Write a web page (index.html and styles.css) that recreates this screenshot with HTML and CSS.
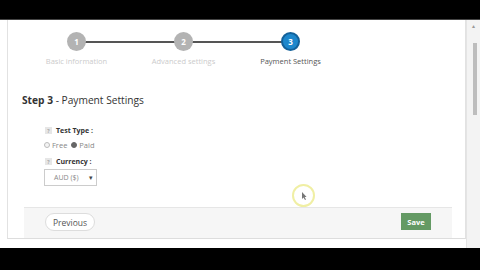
FILE: index.html
```html
<!DOCTYPE html>
<html lang="en">
<head>
    <meta charset="UTF-8">
    <title>Create Test - Payment Settings</title>
    <link rel="stylesheet" href="styles.css">
</head>
<body>
    <div class="screen">
        <div class="topbar"></div>

        <div class="window">
            <div class="page">
                <div class="card">
                    <div class="wizard">
                        <div class="step done">
                            <span class="step-num">1</span>
                            <span class="step-label">Basic information</span>
                        </div>
                        <div class="step done">
                            <span class="step-num">2</span>
                            <span class="step-label">Advanced settings</span>
                        </div>
                        <div class="step active">
                            <span class="step-num">3</span>
                            <span class="step-label">Payment Settings</span>
                        </div>
                    </div>

                    <h2 class="step-title"><b>Step 3</b> - Payment Settings</h2>

                    <div class="form">
                        <div class="field">
                            <label class="field-label"><span class="help">?</span>Test Type :</label>
                            <div class="radios">
                                <label><span class="radio"></span>Free</label>
                                <label><span class="radio checked"></span>Paid</label>
                            </div>
                        </div>
                        <div class="field">
                            <label class="field-label"><span class="help">?</span>Currency :</label>
                            <div class="select">AUD ($) <span class="caret">▾</span></div>
                        </div>
                    </div>

                    <div class="cursor-spot">
                        <div class="cursor-ring">
                            <svg width="6" height="8" viewBox="0 0 6 8"><path d="M1 0 L1 7 L2.5 5.5 L4 8 L5 7.5 L3.6 5 L5.6 5 Z" fill="#777"/></svg>
                        </div>
                    </div>

                    <div class="actions">
                        <button class="btn-prev">Previous</button>
                        <button class="btn-save">Save</button>
                    </div>
                </div>
            </div>
            <div class="scrollbar">
                <span class="arrow">▴</span>
                <div class="thumb"></div>
            </div>
        </div>
    </div>
</body>
</html>
```

FILE: styles.css
```css
* {
    margin: 0;
    padding: 0;
    box-sizing: border-box;
}

body {
    font-family: 'Open Sans', 'Liberation Sans', sans-serif;
    background: #000;
    width: 480px;
    height: 270px;
    overflow: hidden;
}

.screen {
    display: flex;
    flex-direction: column;
    height: 270px;
}

.topbar {
    height: 20px;
    background: #000;
    border-bottom: 1px solid #444;
}

.window {
    height: 228px;
    background: #fff;
    display: flex;
}

.page {
    flex: 1;
    padding: 0 0 9px 7px;
    display: flex;
}

.card {
    flex: 1;
    border-left: 1px solid #e2e2e2;
    border-right: 1px solid #e2e2e2;
    border-bottom: 1px solid #ddd;
    display: flex;
    flex-direction: column;
}

/* wizard */
.wizard {
    display: grid;
    grid-template-columns: repeat(3, 107px);
    padding: 12px 0 0 15px;
}

.step {
    position: relative;
    display: flex;
    flex-direction: column;
    align-items: center;
}

.step + .step::before {
    content: '';
    position: absolute;
    top: 9px;
    left: -50%;
    width: 100%;
    height: 2px;
    background: #555;
}

.step-num {
    position: relative;
    z-index: 1;
    width: 19px;
    height: 19px;
    border-radius: 50%;
    background: #b3b3b3;
    color: #fff;
    font-size: 8px;
    font-weight: 700;
    display: flex;
    align-items: center;
    justify-content: center;
}

.step.active .step-num {
    background: #1d87cc;
    border: 2px solid #13619a;
}

.step-label {
    margin-top: 5px;
    font-size: 7.5px;
    color: #cbcbcb;
    white-space: nowrap;
}

.step.active .step-label {
    color: #555;
}

.step-title {
    margin: 27px 0 0 14px;
    font-size: 10.2px;
    line-height: 15px;
    font-weight: 400;
    color: #333;
}

.step-title b {
    font-weight: 700;
}

/* form */
.form {
    padding: 18px 0 0 36px;
    display: flex;
    flex-direction: column;
    gap: 7px;
}

.field-label {
    display: flex;
    align-items: center;
    font-size: 7px;
    font-weight: 700;
    color: #333;
}

.help {
    width: 7px;
    height: 7px;
    margin: 0 4px 0 1px;
    background: #e6e6e6;
    color: #aaa;
    font-size: 5px;
    display: flex;
    align-items: center;
    justify-content: center;
}

.radios {
    display: flex;
    gap: 4px;
    margin-top: 5px;
    font-size: 7.5px;
    color: #888;
}

.radios label {
    display: flex;
    align-items: center;
    gap: 2px;
}

.radio {
    width: 6px;
    height: 6px;
    border-radius: 50%;
    border: 1px solid #bbb;
    background: #f4f4f4;
}

.radio.checked {
    background: #666;
    border-color: #666;
}

.select {
    margin-top: 3px;
    width: 53px;
    height: 17px;
    border: 1px solid #ccc;
    font-size: 7px;
    color: #888;
    display: flex;
    align-items: center;
    justify-content: space-between;
    padding: 0 3px 0 9px;
}

.caret {
    color: #444;
    font-size: 7px;
}

.cursor-spot {
    display: flex;
    padding-left: 284px;
    margin-top: -2px;
}

.cursor-ring {
    width: 23px;
    height: 23px;
    border-radius: 50%;
    border: 2px solid #f0efa4;
    display: flex;
    align-items: center;
    justify-content: center;
}

/* footer */
.actions {
    margin: 0 13px 0 16px;
    flex: 1;
    background: #f6f6f6;
    border-top: 1px solid #e6e6e6;
    display: flex;
    justify-content: space-between;
    align-items: flex-start;
    padding: 5px 21px 0 21px;
}

.btn-prev {
    font-family: inherit;
    font-size: 8.5px;
    color: #555;
    background: #fff;
    border: 1px solid #ddd;
    border-radius: 10px;
    height: 18px;
    padding: 0 7px;
}

.btn-save {
    font-family: inherit;
    font-size: 7.5px;
    font-weight: 700;
    color: #fff;
    background: #649a64;
    border: none;
    height: 17px;
    width: 30px;
}

/* scrollbar */
.scrollbar {
    width: 14px;
    border-left: 1px solid #e4e4e4;
    background: #f3f3f3;
    display: flex;
    flex-direction: column;
    align-items: center;
}

.arrow {
    font-size: 6px;
    color: #999;
    line-height: 8px;
    margin-top: 2px;
}

.thumb {
    margin: 13px 0 0 3px;
    width: 4px;
    height: 72px;
    background: #bdbdbd;
}
```
